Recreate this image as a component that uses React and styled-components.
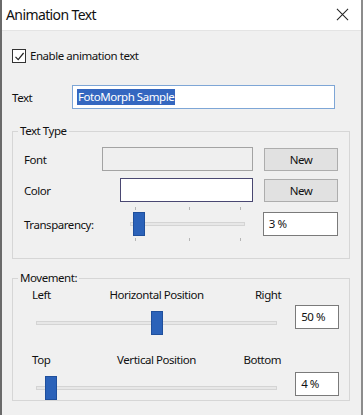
import styled, { createGlobalStyle } from "styled-components";

const GlobalStyle = createGlobalStyle`
    html, body {
        margin: 0;
        padding: 0;
        background: #ffffff;
    }
    * {
        box-sizing: border-box;
    }
`;

function Slider({ value, width, ticks }) {
    const left = (value / 100) * (width - 12);
    return (
        <SliderArea $width={width}>
            {ticks && (
                <TickRow $top>
                    {ticks.map((t) => <Tick key={t} style={{ left: t }} />)}
                </TickRow>
            )}
            <Track />
            <Thumb style={{ left }} />
            {ticks && (
                <TickRow>
                    {ticks.map((t) => <Tick key={t} style={{ left: t }} />)}
                </TickRow>
            )}
        </SliderArea>
    );
}

function PositionSlider({ start, title, end, value, boxTop }) {
    return (
        <PositionGroup>
            <PositionColumn>
                <EndLabels>
                    <EndLabel>{start}</EndLabel>
                    <MidLabel>{title}</MidLabel>
                    <EndLabel $right>{end}</EndLabel>
                </EndLabels>
                <TrackWrap>
                    <Slider value={value} width={241} />
                </TrackWrap>
            </PositionColumn>
            <ValueBox $width={44} $mt={boxTop}>{value} %</ValueBox>
        </PositionGroup>
    );
}

export default function App() {
    return (
        <>
            <GlobalStyle />
            <Window>
                <TitleBar>
                    <Title>Animation Text</Title>
                    <CloseIcon viewBox="0 0 14 14">
                        <path d="M1 1 L13 13 M13 1 L1 13" stroke="#222" strokeWidth="1.1" fill="none" />
                    </CloseIcon>
                </TitleBar>
                <Body>
                    <CheckRow>
                        <CheckBox>
                            <svg width="11" height="11" viewBox="0 0 11 11">
                                <path d="M1.5 5.8 L4.2 8.6 L9.6 2" stroke="#222" strokeWidth="1.2" fill="none" />
                            </svg>
                        </CheckBox>
                        <Label>Enable animation text</Label>
                    </CheckRow>

                    <TextRow>
                        <RowLabel $width={60}>Text</RowLabel>
                        <TextInput>
                            <Selected>FotoMorph Sample</Selected>
                        </TextInput>
                    </TextRow>

                    <Group>
                        <Legend>Text Type</Legend>
                        <GroupContent $pb={16}>
                            <TypeRow $mt={8}>
                                <RowLabel>Font</RowLabel>
                                <Field $width={151} />
                                <NewButton>New</NewButton>
                            </TypeRow>
                            <TypeRow $mt={7}>
                                <RowLabel>Color</RowLabel>
                                <Field $width={133} $white />
                                <NewButton>New</NewButton>
                            </TypeRow>
                            <TransparencyRow>
                                <RowLabel $width={106}>Transparency:</RowLabel>
                                <Slider value={3} width={116} ticks={[5, 59, 110]} />
                                <ValueBox $width={76} $ml={18}>3 %</ValueBox>
                            </TransparencyRow>
                        </GroupContent>
                    </Group>

                    <Group $mt={11}>
                        <Legend>Movement:</Legend>
                        <GroupContent $pl={19} $pr={10}>
                            <PositionSlider start="Left" title="Horizontal Position" end="Right" value={50} boxTop={18} />
                            <PositionSlider start="Top" title="Vertical Position" end="Bottom" value={4} boxTop={20} />
                        </GroupContent>
                    </Group>
                </Body>
            </Window>
        </>
    );
}

const Window = styled.div`
    width: 363px;
    height: 415px;
    overflow: hidden;
    background-color: #f0f0f0;
    border-left: 2px solid #6a6a6a;
    border-right: 2px solid #8c8c8c;
    font-family: "Noto Sans", "Open Sans", sans-serif;
    font-size: 11.5px;
    letter-spacing: -0.45px;
    color: #111111;
`;

const TitleBar = styled.div`
    height: 31px;
    background-color: #ffffff;
    display: flex;
    align-items: center;
    justify-content: space-between;
    padding: 0 12px 2px 4px;
    border-bottom: 1px solid #e4e4e4;
`;

const Title = styled.div`
    font-size: 14px;
    letter-spacing: -0.6px;
    color: #111111;
`;

const CloseIcon = styled.svg`
    width: 13px;
    height: 13px;
`;

const Body = styled.div`
    padding: 0 11px 0 10px;
`;

const CheckRow = styled.div`
    display: flex;
    align-items: center;
    gap: 4px;
    margin-top: 18px;
    height: 14px;
`;

const CheckBox = styled.div`
    width: 14px;
    height: 14px;
    border: 1px solid #333333;
    background: #ffffff;
    display: flex;
    align-items: center;
    justify-content: center;
`;

const Label = styled.span`
    line-height: 14px;
`;

const TextRow = styled.div`
    display: flex;
    align-items: center;
    margin-top: 22px;
    height: 24px;
`;

const RowLabel = styled.div`
    width: ${(p) => (p.$width ? `${p.$width}px` : "auto")};
    flex: ${(p) => (p.$width ? "none" : "1")};
`;

const TextInput = styled.div`
    width: 263px;
    height: 24px;
    border: 1px solid #7ea6d6;
    background: #ffffff;
    display: flex;
    align-items: center;
    padding-left: 4px;
`;

const Selected = styled.span`
    background-color: #3467c0;
    color: #ffffff;
    line-height: 16px;
    padding: 0 1px;
`;

const Group = styled.fieldset`
    margin: ${(p) => p.$mt || 14}px 0 0 0;
    padding: 0;
    border: 1px solid #d6d6d6;
    min-width: 0;
`;

const Legend = styled.legend`
    padding: 0 2px;
    margin-left: 5px;
    line-height: 16px;
`;

const GroupContent = styled.div`
    padding: 0 ${(p) => p.$pr || 11}px ${(p) => p.$pb || 0}px ${(p) => p.$pl || 11}px;
`;

const TypeRow = styled.div`
    display: flex;
    align-items: center;
    gap: 11px;
    height: 24px;
    margin-top: ${(p) => p.$mt}px;
`;

const Field = styled.div`
    width: ${(p) => p.$width}px;
    height: 24px;
    background: ${(p) => (p.$white ? "#ffffff" : "#efefef")};
    border: 1px solid ${(p) => (p.$white ? "#4a4872" : "#a3a3a3")};
`;

const NewButton = styled.div`
    width: 74px;
    height: 23px;
    background: #e1e1e1;
    border: 1px solid #adadad;
    display: flex;
    align-items: center;
    justify-content: center;
`;

const TransparencyRow = styled.div`
    display: flex;
    align-items: center;
    height: 36px;
    margin-top: 4px;
`;

const ValueBox = styled.div`
    width: ${(p) => p.$width}px;
    height: 24px;
    margin-left: ${(p) => p.$ml || 0}px;
    margin-top: ${(p) => p.$mt || 0}px;
    background: #ffffff;
    border: 1px solid #7a7a7a;
    padding: 3px 0 0 5px;
`;

const SliderArea = styled.div`
    position: relative;
    width: ${(p) => p.$width}px;
    height: 24px;
    display: flex;
    align-items: center;
`;

const Track = styled.div`
    width: 100%;
    height: 4px;
    background: #e7e7e7;
    border: 1px solid #d4d4d4;
`;

const Thumb = styled.div`
    position: absolute;
    top: 0;
    width: 12px;
    height: 24px;
    background: #2b62b9;
    border: 1px solid #1f4f9c;
`;

const TickRow = styled.div`
    position: absolute;
    left: 0;
    right: 0;
    top: ${(p) => (p.$top ? "-5px" : "26px")};
    height: 3px;
`;

const Tick = styled.div`
    position: absolute;
    top: 0;
    width: 1px;
    height: 3px;
    background: #b5b5b5;
`;

const PositionGroup = styled.div`
    display: flex;
    align-items: flex-start;
    gap: 14px;
    margin-top: 1px;
    & + & {
        margin-top: 17px;
    }
`;

const PositionColumn = styled.div`
    width: 250px;
    display: flex;
    flex-direction: column;
    gap: 8px;
`;

const EndLabels = styled.div`
    display: grid;
    grid-template-columns: 1fr auto 1fr;
    line-height: 16px;
`;

const EndLabel = styled.span`
    justify-self: ${(p) => (p.$right ? "end" : "start")};
`;

const MidLabel = styled.span``;

const TrackWrap = styled.div`
    padding: 0 4px;
`;
